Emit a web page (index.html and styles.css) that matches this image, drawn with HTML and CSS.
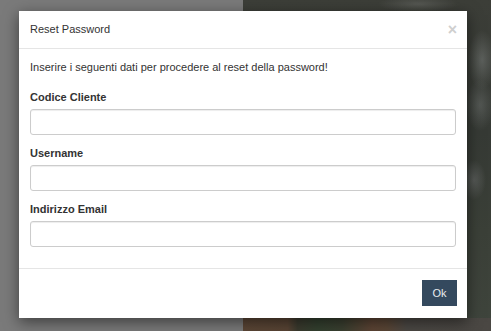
FILE: index.html
```html
<!DOCTYPE html>
<html lang="it">
<head>
<meta charset="utf-8">
<title>Reset Password</title>
<link rel="stylesheet" href="styles.css">
</head>
<body>
<div class="page">
  <div class="side-left"></div>
  <div class="side-right">
    <div class="photo-bottom"></div>
  </div>
</div>
<div class="modal">
  <div class="modal-header">
    <h4 class="modal-title">Reset Password</h4>
    <button class="close" type="button" aria-label="Chiudi">&times;</button>
  </div>
  <div class="modal-body">
    <p class="intro">Inserire i seguenti dati per procedere al reset della password!</p>
    <div class="form-group">
      <label class="label">Codice Cliente</label>
      <input class="form-control" type="text">
    </div>
    <div class="form-group">
      <label class="label">Username</label>
      <input class="form-control" type="text">
    </div>
    <div class="form-group">
      <label class="label">Indirizzo Email</label>
      <input class="form-control" type="text">
    </div>
  </div>
  <div class="modal-footer">
    <button class="btn-ok" type="button">Ok</button>
  </div>
</div>
</body>
</html>
```

FILE: styles.css
```css
* { box-sizing: border-box; }
html, body { margin: 0; padding: 0; }
body {
  width: 491px;
  height: 331px;
  overflow: hidden;
  font-family: "Liberation Sans", Arial, sans-serif;
  font-size: 11px;
  color: #333;
  background: #777;
}
.page {
  display: grid;
  grid-template-columns: 243px 1fr;
  height: 331px;
}
.side-left {
  background: #7a7a7a;
}
.side-right {
  position: relative;
  background:
    radial-gradient(ellipse 14px 30px at 239px 60px, rgba(120,124,122,0.55), rgba(120,124,122,0) 100%),
    radial-gradient(ellipse 14px 26px at 237px 105px, rgba(110,114,112,0.5), rgba(110,114,112,0) 100%),
    radial-gradient(ellipse 12px 20px at 231px 180px, rgba(110,112,112,0.55), rgba(110,112,112,0) 100%),
    radial-gradient(ellipse 40px 8px at 175px 4px, rgba(110,112,108,0.5), rgba(110,112,108,0) 100%),
    linear-gradient(180deg, #3c3e38 0%, #363a35 40%, #3b4038 70%, #3f453d 100%);
  display: flex;
  flex-direction: column;
  justify-content: flex-end;
}
.photo-bottom {
  height: 13px;
  background: linear-gradient(90deg, #5b4636 0%, #584434 18%, #3a3a2e 22%, #33402f 30%, #3a3f30 40%, #5c4434 52%, #5a4636 58%, #4b4844 66%, #4a4743 100%);
}
.modal {
  position: absolute;
  left: 19px;
  top: 11px;
  width: 448px;
  background: #fff;
  box-shadow: 0 4px 14px rgba(0,0,0,0.5);
}
.modal-header {
  display: flex;
  align-items: center;
  justify-content: space-between;
  padding: 11px;
  border-bottom: 1px solid #e5e5e5;
}
.modal-title {
  margin: 0;
  font-size: 11px;
  font-weight: normal;
  line-height: 15px;
  color: #333;
}
.close {
  border: 0;
  background: none;
  padding: 0;
  margin: 0 -1px 0 0;
  font-family: "Liberation Sans", Arial, sans-serif;
  font-size: 16px;
  font-weight: bold;
  line-height: 15px;
  color: #cfcfcf;
}
.modal-body {
  padding: 11px 11px 10px 11px;
  display: flex;
  flex-direction: column;
}
.intro {
  margin: 0 0 15px 0;
  line-height: 15px;
}
.form-group {
  display: flex;
  flex-direction: column;
  margin-bottom: 11px;
}
.label {
  font-weight: bold;
  line-height: 15px;
  margin-bottom: 4px;
}
.form-control {
  height: 26px;
  width: 100%;
  border: 1px solid #ccc;
  border-radius: 3px;
  box-shadow: inset 0 1px 1px rgba(0,0,0,0.075);
  background: #fff;
  font: inherit;
  padding: 4px 9px;
}
.modal-footer {
  display: flex;
  justify-content: flex-end;
  padding: 11px 10px 12px 11px;
  border-top: 1px solid #e5e5e5;
}
.btn-ok {
  width: 35px;
  height: 26px;
  border: 0;
  border-radius: 0;
  background: #34495e;
  color: #e8ecef;
  font-family: "Liberation Sans", Arial, sans-serif;
  font-size: 11px;
  padding: 0;
}
```
